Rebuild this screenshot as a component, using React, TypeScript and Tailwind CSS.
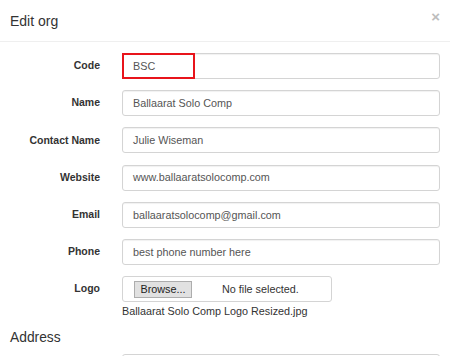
import React from "react";

const rows: { label: string; value: string }[] = [
  { label: "Code", value: "BSC" },
  { label: "Name", value: "Ballaarat Solo Comp" },
  { label: "Contact Name", value: "Julie Wiseman" },
  { label: "Website", value: "www.ballaaratsolocomp.com" },
  { label: "Email", value: "ballaaratsolocomp@gmail.com" },
  { label: "Phone", value: "best phone number here" },
];

export default function App() {
  return (
    <div
      className="relative w-[450px] h-[356px] overflow-hidden bg-white text-[#333]"
      style={{ fontFamily: '"Liberation Sans", Arial, sans-serif' }}
    >
      <div className="relative h-[42px] border-b border-[#efefef] flex items-center px-[10px]">
        <span className="text-[14px] leading-none pt-[1px]">Edit org</span>
        <span className="absolute right-[10px] top-[9px] text-[15px] font-bold leading-none text-[#bdbdbd]">×</span>
      </div>
      <div className="pt-[11px] flex flex-col gap-[11.2px]">
        {rows.map((r) => (
          <div key={r.label} className="flex items-center">
            <div className="w-[100px] text-right text-[10.5px] font-bold">{r.label}</div>
            <div className="ml-[22px] w-[318px] h-[26px] border border-[#d4d4d4] rounded-[3px] flex items-center pl-[10px] text-[10.8px] text-[#555] shadow-[inset_0_1px_1px_rgba(0,0,0,0.06)]">
              {r.value}
            </div>
          </div>
        ))}
        <div className="flex items-start">
          <div className="w-[100px] h-[26px] flex items-center justify-end text-[10.5px] font-bold">Logo</div>
          <div className="ml-[22px] flex flex-col">
            <div className="w-[210px] h-[26px] border border-[#d4d4d4] rounded-[3px] flex items-center pl-[11px] text-[10.8px] text-[#333]">
              <span className="h-[17px] w-[58px] flex items-center justify-center bg-[#e1e1e1] border border-[#adadad] text-[#222]">
                Browse...
              </span>
              <span className="ml-[30px]">No file selected.</span>
            </div>
            <div className="h-[11px] text-[10.8px] leading-none mt-[4px]">Ballaarat Solo Comp Logo Resized.jpg</div>
          </div>
        </div>
      </div>
      <div className="px-[10px] mt-[14px] h-[14px] text-[13.8px] leading-none">Address</div>
      <div className="flex mt-[9px]">
        <div className="ml-[122px] w-[318px] h-[26px] border border-[#d4d4d4] rounded-[3px]" />
      </div>
      <div className="absolute left-[122px] top-[53px] w-[73px] h-[26px] border-2 border-[#e8141b]" />
    </div>
  );
}
